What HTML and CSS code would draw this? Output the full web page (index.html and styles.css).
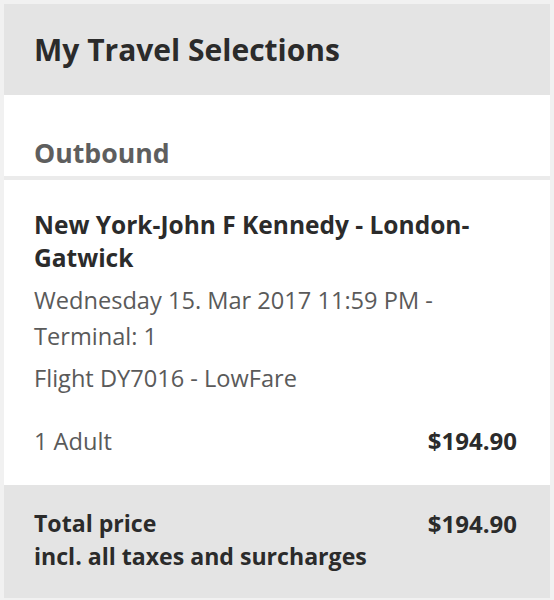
FILE: index.html
```html
<!DOCTYPE html>
<html lang="en">
<head>
<meta charset="utf-8">
<title>My Travel Selections</title>
<link rel="stylesheet" href="styles.css">
</head>
<body>
<div class="card">
  <div class="card-header">
    <h1 class="title">My Travel Selections</h1>
  </div>
  <div class="direction">
    <h2 class="direction-title">Outbound</h2>
  </div>
  <div class="segment">
    <p class="route">New York-John F Kennedy - London-Gatwick</p>
    <p class="detail date">Wednesday 15. Mar 2017 11:59 PM - Terminal: 1</p>
    <p class="detail flight">Flight DY7016 - LowFare</p>
    <div class="row passenger">
      <span class="detail">1 Adult</span>
      <span class="price">$194.90</span>
    </div>
  </div>
  <div class="total">
    <div class="total-label">
      <span>Total price</span>
      <span>incl. all taxes and surcharges</span>
    </div>
    <span class="price">$194.90</span>
  </div>
</div>
</body>
</html>
```
FILE: styles.css
```css
html, body {
  margin: 0;
  padding: 0;
}
body {
  background: #f1f1f1;
  padding: 4px;
  font-family: "Open Sans", "Noto Sans", sans-serif;
  color: #2b2b2b;
}
.card {
  background: #ffffff;
}
.card-header {
  background: #e4e4e4;
  height: 91px;
  display: flex;
  align-items: center;
  padding: 0 30px;
}
.title {
  margin: 0;
  font-size: 30px;
  font-weight: 700;
  line-height: 36px;
  color: #2b2b2b;
}
.direction {
  height: 81px;
  display: flex;
  align-items: flex-end;
  padding: 0 30px 8px;
  box-sizing: border-box;
}
.direction-title {
  margin: 0;
  font-size: 26.7px;
  font-weight: 700;
  line-height: 30px;
  color: #5e5e5e;
}
.segment {
  border-top: 4px solid #ebebeb;
  padding: 28px 33px 26px 30px;
}
.route {
  margin: 0;
  font-size: 24.5px;
  font-weight: 700;
  line-height: 33px;
  color: #2b2b2b;
}
.detail {
  margin: 0;
  font-size: 23.6px;
  font-weight: 400;
  line-height: 36px;
  color: #5a5a5a;
}
.date {
  margin-top: 8px;
}
.flight {
  margin-top: 6px;
}
.row {
  display: flex;
  justify-content: space-between;
  align-items: center;
}
.passenger {
  margin-top: 27px;
}
.price {
  font-size: 24px;
  font-weight: 700;
  line-height: 36px;
  color: #2b2b2b;
}
.total {
  background: #e4e4e4;
  display: flex;
  justify-content: space-between;
  align-items: flex-start;
  padding: 22px 33px 25px 30px;
}
.total-label {
  display: flex;
  flex-direction: column;
  font-size: 23.1px;
  font-weight: 700;
  line-height: 33px;
  color: #2b2b2b;
}
.total .price {
  line-height: 33px;
}
```
